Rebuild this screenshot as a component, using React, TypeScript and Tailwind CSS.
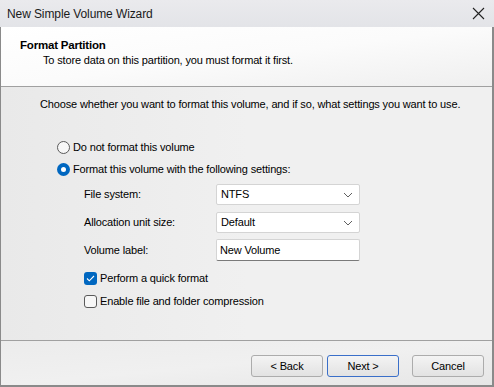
import React from 'react';

const font = { fontFamily: '"Segoe UI", "Liberation Sans", Arial, sans-serif' };

const txt = 'text-[11px] tracking-[-0.15px] text-black';

const Chevron = () => (
  <svg width="10" height="6" viewBox="0 0 10 6" className="text-[#606060]">
    <path d="M1 1 L5 5 L9 1" fill="none" stroke="currentColor" strokeWidth="1" />
  </svg>
);

const Select: React.FC<{ value: string }> = ({ value }) => (
  <div className="flex h-[21px] w-[144px] items-center justify-between rounded-[2px] border border-[#d4d4d4] bg-white pl-[4px] pr-[6px]">
    <span className={txt}>{value}</span>
    <Chevron />
  </div>
);

const Radio: React.FC<{ checked?: boolean; label: string }> = ({ checked, label }) => (
  <div className="flex h-[22px] items-center">
    {checked ? (
      <div className="flex h-[13px] w-[13px] items-center justify-center rounded-full bg-[#0067c0]">
        <div className="h-[5px] w-[5px] rounded-full bg-white" />
      </div>
    ) : (
      <div className="h-[13px] w-[13px] rounded-full border border-[#5a5a5a] bg-[#f7f7f7]" />
    )}
    <span className={'ml-[3px] ' + txt}>{label}</span>
  </div>
);

const Checkbox: React.FC<{ checked?: boolean; label: string }> = ({ checked, label }) => (
  <div className="flex h-[23px] items-center">
    {checked ? (
      <div className="flex h-[13px] w-[13px] items-center justify-center rounded-[3px] bg-[#0067c0]">
        <svg width="9" height="7" viewBox="0 0 9 7">
          <path d="M1 3.5 L3.3 5.8 L8 1" fill="none" stroke="white" strokeWidth="1.1" />
        </svg>
      </div>
    ) : (
      <div className="h-[13px] w-[13px] rounded-[3px] border border-[#5a5a5a] bg-[#f7f7f7]" />
    )}
    <span className={'ml-[3px] ' + txt}>{label}</span>
  </div>
);

const Button: React.FC<{ label: string; primary?: boolean }> = ({ label, primary }) => (
  <button
    className={
      'flex h-[22px] w-[72px] items-center justify-center rounded-[3px] border bg-gradient-to-b from-[#f4f4f4] to-[#e2e2e2] ' +
      txt +
      (primary ? ' border-[#3a6fc9]' : ' border-[#acacac]')
    }
  >
    {label}
  </button>
);

export default function App() {
  return (
    <div style={font} className="flex h-[387px] w-[494px] flex-col overflow-hidden bg-[#f0f0f0]">
      <div className="flex h-[27px] shrink-0 items-center justify-between bg-gradient-to-b from-[#eaeaed] to-[#e3e4e8] pl-[7px] pr-[6px]">
        <span className="text-[12px] tracking-[-0.1px] text-[#1a1a1a]">New Simple Volume Wizard</span>
        <svg width="13" height="13" viewBox="0 0 13 13" className="mr-[3px]">
          <path d="M1 1 L12 12 M12 1 L1 12" stroke="#222" strokeWidth="1.1" />
        </svg>
      </div>
      <div className="flex flex-1 flex-col border-b-2 border-l border-r-2 border-[#8a8a8a]">
        <div className="h-[60px] shrink-0 border-b border-[#a0a0a0] bg-gradient-to-br from-white via-[#fbfbfb] to-[#efefef] pl-[19px] pt-[10px]">
          <div className="text-[11.5px] font-bold leading-[16px] tracking-[-0.2px] text-black">Format Partition</div>
          <div className={'ml-[23px] leading-[15px] ' + txt}>
            To store data on this partition, you must format it first.
          </div>
        </div>
        <div className="flex h-[254px] shrink-0 flex-col border-b border-[#a0a0a0] bg-gradient-to-r from-[#e9e9e9] via-[#f0f0f0] to-[#f0f0f0] pl-[39px] pt-[10px]">
          <div className={'whitespace-nowrap leading-[15px] ' + txt}>
            Choose whether you want to format this volume, and if so, what settings you want to use.
          </div>
          <div className="ml-[17px] mt-[24px] flex flex-col">
            <Radio label="Do not format this volume" />
            <Radio checked label="Format this volume with the following settings:" />
            <div className="ml-[27px] mt-[4px] flex flex-col">
              <div className="flex items-center">
                <span className={'w-[132px] ' + txt}>File system:</span>
                <Select value="NTFS" />
              </div>
              <div className="mt-[7px] flex items-center">
                <span className={'w-[132px] ' + txt}>Allocation unit size:</span>
                <Select value="Default" />
              </div>
              <div className="mt-[6px] flex items-center">
                <span className={'w-[132px] ' + txt}>Volume label:</span>
                <div className={'flex h-[22px] w-[144px] items-center rounded-[2px] border border-[#d4d4d4] border-b-[#7a7a7a] bg-white pl-[3px] ' + txt}>
                  New Volume
                </div>
              </div>
            </div>
            <div className="ml-[27px] mt-[6px] flex flex-col">
              <Checkbox checked label="Perform a quick format" />
              <Checkbox label="Enable file and folder compression" />
            </div>
          </div>
        </div>
        <div className="flex flex-1 items-start justify-end bg-gradient-to-br from-[#ececec] via-[#f0f0f0] to-[#e6e6e6] pr-[8px] pt-[14px]">
          <Button label="< Back" />
          <div className="ml-[4px]">
            <Button primary label="Next >" />
          </div>
          <div className="ml-[13px]">
            <Button label="Cancel" />
          </div>
        </div>
      </div>
    </div>
  );
}
